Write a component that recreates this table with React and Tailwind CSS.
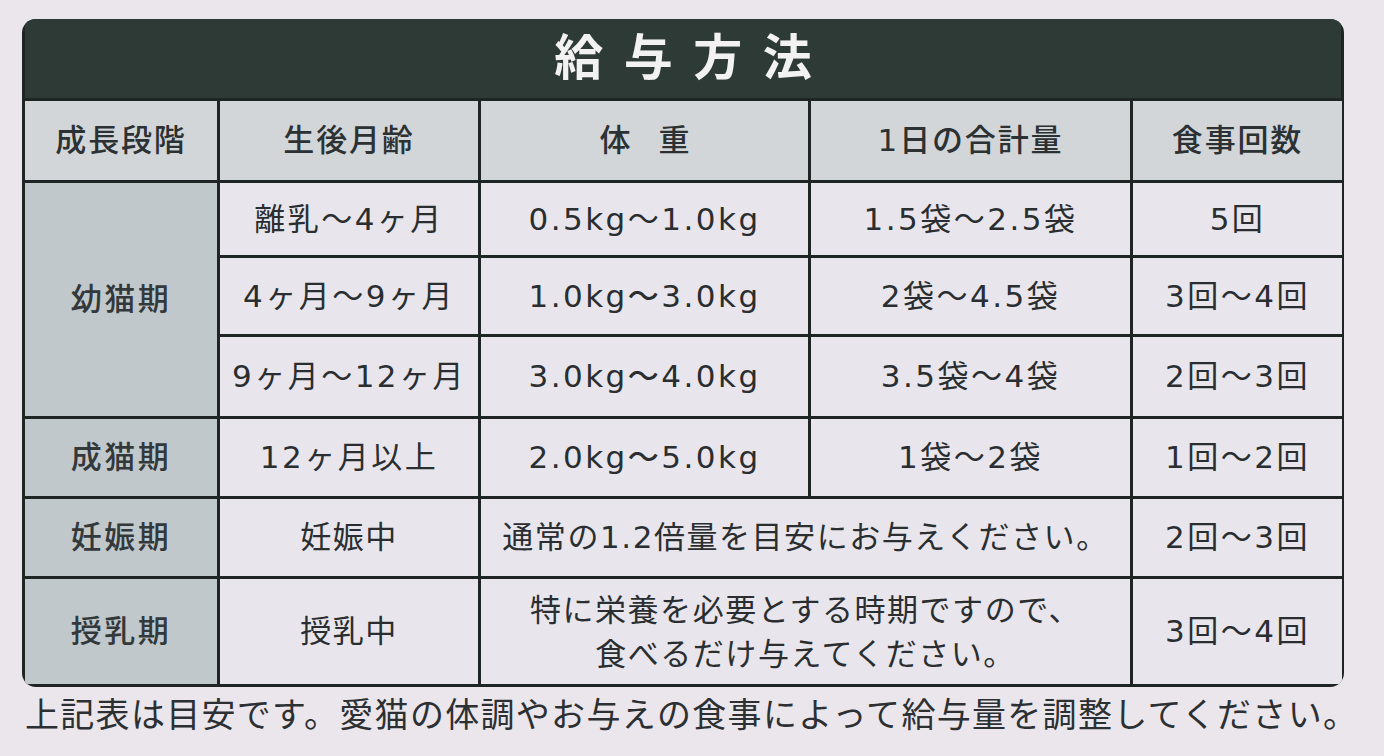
import React from "react";

const cell = "flex items-center justify-center text-center bg-[#e8e6ec] text-[#2a2e30] text-[31px] leading-[1.3] tracking-[0.05em]";
const num = "tracking-[0.08em]";
const stage = "flex items-center justify-center bg-[#c1c8cb] text-[#33393b] text-[31px] font-medium tracking-[0.08em]";
const head = "flex items-center justify-center bg-[#d2d6d9] text-[#2c3133] text-[31px] font-medium tracking-[0.06em]";

export default function App() {
  return (
    <div className="w-[1384px] h-[756px] overflow-hidden bg-[#ebe6ec] pt-[19px] pl-[22px] font-['DejaVu_Sans','Noto_Sans_CJK_JP',sans-serif]">
      <div className="w-[1322px] rounded-[14px] overflow-hidden bg-[#1f2523] px-[3px] pb-[3px]">
        <div className="h-[79px] bg-[#2e3a36] flex items-center justify-center text-[#f2f2f2] text-[49px] font-semibold tracking-[0.42em] pl-[0.42em]">
          給与方法
        </div>
        <div className="mt-[3px] grid grid-cols-[192px_258px_327px_319px_209px] grid-rows-[79px_72px_76px_79px_77px_77px_105px] gap-[3px]">
          <div className={head}>成長段階</div>
          <div className={`${head} font-bold text-[#1d2123]`}>生後月齢</div>
          <div className={`${head} tracking-[0.9em] pl-[0.9em]`}>体重</div>
          <div className={head}>1日の合計量</div>
          <div className={head}>食事回数</div>

          <div className={`${stage} row-span-3`}>幼猫期</div>
          <div className={`${cell} ${num}`}>離乳〜4ヶ月</div>
          <div className={`${cell} ${num}`}>0.5kg〜1.0kg</div>
          <div className={`${cell} ${num}`}>1.5袋〜2.5袋</div>
          <div className={`${cell} ${num}`}>5回</div>

          <div className={`${cell} ${num}`}>4ヶ月〜9ヶ月</div>
          <div className={`${cell} ${num} font-medium`}>1.0kg〜3.0kg</div>
          <div className={`${cell} ${num}`}>2袋〜4.5袋</div>
          <div className={`${cell} ${num}`}>3回〜4回</div>

          <div className={`${cell} ${num}`}>9ヶ月〜12ヶ月</div>
          <div className={`${cell} ${num} font-medium`}>3.0kg〜4.0kg</div>
          <div className={`${cell} ${num}`}>3.5袋〜4袋</div>
          <div className={`${cell} ${num}`}>2回〜3回</div>

          <div className={stage}>成猫期</div>
          <div className={`${cell} ${num}`}>12ヶ月以上</div>
          <div className={`${cell} ${num} font-medium`}>2.0kg〜5.0kg</div>
          <div className={`${cell} ${num}`}>1袋〜2袋</div>
          <div className={`${cell} ${num}`}>1回〜2回</div>

          <div className={stage}>妊娠期</div>
          <div className={cell}>妊娠中</div>
          <div className={`${cell} col-span-2`}>通常の1.2倍量を目安にお与えください。</div>
          <div className={`${cell} ${num}`}>2回〜3回</div>

          <div className={stage}>授乳期</div>
          <div className={cell}>授乳中</div>
          <div className={`${cell} col-span-2 flex-col leading-[44px]`}>
            <span className="block">特に栄養を必要とする時期ですので、</span>
            <span className="block">食べるだけ与えてください。</span>
          </div>
          <div className={`${cell} ${num}`}>3回〜4回</div>
        </div>
      </div>
      <p className="mt-[8px] pl-[3px] text-[34px] leading-[40px] tracking-[1.3px] text-[#2c3032] whitespace-nowrap">
        上記表は目安です。愛猫の体調やお与えの食事によって給与量を調整してください。
      </p>
    </div>
  );
}
